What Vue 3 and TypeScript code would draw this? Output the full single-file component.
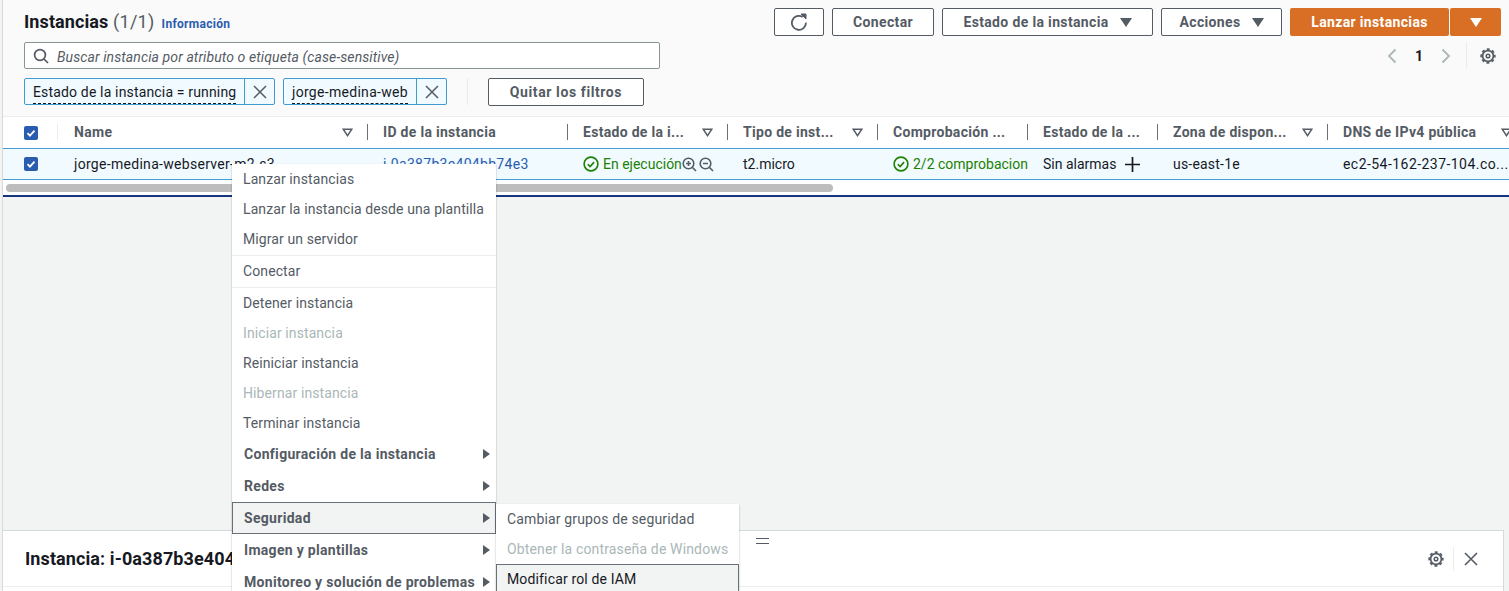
<script setup lang="ts">
interface Col { label: string; filter: boolean }
const cols: Col[] = [
  { label: 'Name', filter: true },
  { label: 'ID de la instancia', filter: false },
  { label: 'Estado de la i...', filter: true },
  { label: 'Tipo de inst...', filter: true },
  { label: 'Comprobación ...', filter: false },
  { label: 'Estado de la ...', filter: false },
  { label: 'Zona de dispon...', filter: true },
  { label: 'DNS de IPv4 pública', filter: true },
]
interface Item { t: string; kind?: string; sep?: boolean }
const items: Item[] = [
  { t: 'Lanzar instancias' },
  { t: 'Lanzar la instancia desde una plantilla' },
  { t: 'Migrar un servidor', sep: true },
  { t: 'Conectar', sep: true },
  { t: 'Detener instancia' },
  { t: 'Iniciar instancia', kind: 'off' },
  { t: 'Reiniciar instancia' },
  { t: 'Hibernar instancia', kind: 'off' },
  { t: 'Terminar instancia' },
  { t: 'Configuración de la instancia', kind: 'sub' },
  { t: 'Redes', kind: 'sub' },
  { t: 'Seguridad', kind: 'sub active' },
  { t: 'Imagen y plantillas', kind: 'sub' },
  { t: 'Monitoreo y solución de problemas', kind: 'sub' },
]
const subItems: Item[] = [
  { t: 'Cambiar grupos de seguridad' },
  { t: 'Obtener la contraseña de Windows', kind: 'off' },
  { t: 'Modificar rol de IAM', kind: 'hover' },
]
</script>

<template>
  <div class="page">
    <section class="top">
      <div class="head">
        <div class="title-row">
          <h1>Instancias <span class="count">(1/1)</span></h1>
          <a class="info">Información</a>
        </div>
        <div class="actions">
          <button class="btn icon-btn" aria-label="Actualizar">
            <svg width="18" height="18" viewBox="0 0 18 18" fill="none" stroke="#545b64" stroke-width="1.8"><path d="M12.6 3.9A7 7 0 1 0 15.9 9.6" /><path d="M11 1h5v5z" fill="#545b64" stroke-width="1" /></svg>
          </button>
          <button class="btn w-connect">Conectar</button>
          <button class="btn w-state">Estado de la instancia <i class="caret"></i></button>
          <button class="btn w-actions">Acciones <i class="caret"></i></button>
          <div class="launch">
            <button class="primary w-launch">Lanzar instancias</button>
            <button class="primary w-arrow"><i class="caret white"></i></button>
          </div>
        </div>
      </div>
      <div class="search-row">
        <div class="search">
          <svg width="16" height="16" viewBox="0 0 16 16" fill="none" stroke="#545b64" stroke-width="1.7"><circle cx="7" cy="7" r="5.4" /><path d="M11 11l4 4" /></svg>
          <span class="search-text">Buscar instancia por atributo o etiqueta (case-sensitive)</span>
        </div>
        <div class="pager">
          <svg width="10" height="16" viewBox="0 0 10 16" fill="none" stroke="#aab7b8" stroke-width="1.8"><path d="M8.5 1.5L2 8l6.5 6.5" /></svg>
          <b>1</b>
          <svg width="10" height="16" viewBox="0 0 10 16" fill="none" stroke="#aab7b8" stroke-width="1.8"><path d="M1.5 1.5L8 8l-6.5 6.5" /></svg>
          <span class="pager-sep"></span>
          <svg class="gear" width="16" height="16" viewBox="0 0 16 16" fill="none" stroke="#545b64"><circle cx="8" cy="8" r="5.4" stroke-width="1.7" /><circle cx="8" cy="8" r="1.8" stroke-width="1.5" /><circle cx="8" cy="8" r="6.8" stroke-width="1.7" stroke-dasharray="3 2.34" stroke-dashoffset="1.5" /></svg>
        </div>
      </div>
      <div class="chips">
        <div class="chip w-chip1"><span class="chip-cell"><span class="chip-text">Estado de la instancia = running</span></span><span class="chip-x"><svg width="14" height="14" viewBox="0 0 14 14" stroke="#545b64" stroke-width="1.5"><path d="M1 1l12 12M13 1L1 13" /></svg></span></div>
        <div class="chip w-chip2"><span class="chip-cell"><span class="chip-text">jorge-medina-web</span></span><span class="chip-x"><svg width="14" height="14" viewBox="0 0 14 14" stroke="#545b64" stroke-width="1.5"><path d="M1 1l12 12M13 1L1 13" /></svg></span></div>
        <span class="chip-sep"></span>
        <button class="btn w-clear">Quitar los filtros</button>
      </div>
    </section>

    <section class="table">
      <div class="grid header">
        <div class="select-cell"><span class="check"><svg width="10" height="10" viewBox="0 0 10 10" fill="none" stroke="#fff" stroke-width="1.8"><path d="M1.5 5.2l2.4 2.4 4.6-5" /></svg></span></div>
        <div v-for="c in cols" :key="c.label" class="th">
          <span class="th-text">{{ c.label }}</span>
          <svg v-if="c.filter" class="sort" width="11" height="9" viewBox="0 0 11 9" fill="none" stroke="#545b64" stroke-width="1.5"><path d="M1.2 1.2h8.6L5.5 7.6z" /></svg>
        </div>
      </div>
      <div class="grid row">
        <div class="select-cell"><span class="check"><svg width="10" height="10" viewBox="0 0 10 10" fill="none" stroke="#fff" stroke-width="1.8"><path d="M1.5 5.2l2.4 2.4 4.6-5" /></svg></span></div>
        <div class="td name">jorge-medina-webserver-m2-s3</div>
        <div class="td"><a class="link">i-0a387b3e404bb74e3</a></div>
        <div class="td status">
          <svg class="ok" width="16" height="16" viewBox="0 0 16 16" fill="none" stroke="#1d8102" stroke-width="1.6"><circle cx="8" cy="8" r="6.9" /><path d="M4.8 8.2l2.3 2.3 4-4.4" /></svg>
          <span>En ejecución</span>
          <svg class="zoom-a" width="15" height="15" viewBox="0 0 15 15" fill="none" stroke="#545b64" stroke-width="1.6"><circle cx="6.5" cy="6.5" r="5.3" /><path d="M10.5 10.5L14 14M4 6.5h5M6.5 4v5" /></svg>
          <svg class="zoom-b" width="15" height="15" viewBox="0 0 15 15" fill="none" stroke="#545b64" stroke-width="1.6"><circle cx="6.5" cy="6.5" r="5.3" /><path d="M10.5 10.5L14 14M4 6.5h5" /></svg>
        </div>
        <div class="td">t2.micro</div>
        <div class="td status clip">
          <svg class="ok" width="16" height="16" viewBox="0 0 16 16" fill="none" stroke="#1d8102" stroke-width="1.6"><circle cx="8" cy="8" r="6.9" /><path d="M4.8 8.2l2.3 2.3 4-4.4" /></svg>
          <span>2/2 comprobaciones</span>
        </div>
        <div class="td alarm">Sin alarmas
          <svg width="15" height="15" viewBox="0 0 15 15" stroke="#16191f" stroke-width="1.7"><path d="M7.5 0v15M0 7.5h15" /></svg>
        </div>
        <div class="td zone">us-east-1e</div>
        <div class="td dns">ec2-54-162-237-104.co...</div>
      </div>
      <div class="scroll-track"><div class="scroll-thumb"></div></div>
    </section>

    <div class="splitter"></div>

    <section class="details">
      <div class="details-head">
        <h2>Instancia: i-0a387b3e404bb74e3</h2>
        <span class="drag"></span>
        <div class="details-tools">
          <svg width="16" height="16" viewBox="0 0 16 16" fill="none" stroke="#545b64"><circle cx="8" cy="8" r="5.4" stroke-width="1.7" /><circle cx="8" cy="8" r="1.8" stroke-width="1.5" /><circle cx="8" cy="8" r="6.8" stroke-width="1.7" stroke-dasharray="3 2.34" stroke-dashoffset="1.5" /></svg>
          <span class="tool-sep"></span>
          <svg width="14" height="14" viewBox="0 0 14 14" stroke="#545b64" stroke-width="1.6"><path d="M1 1l12 12M13 1L1 13" /></svg>
        </div>
      </div>
    </section>

    <ul class="menu">
      <li v-for="it in items" :key="it.t" :class="['item', it.kind, { sep: it.sep }]">
        <span>{{ it.t }}</span>
        <i v-if="it.kind && it.kind.includes('sub')" class="arrow"></i>
      </li>
    </ul>
    <ul class="menu submenu">
      <li v-for="it in subItems" :key="it.t" :class="['item', it.kind]"><span>{{ it.t }}</span></li>
    </ul>
  </div>
</template>

<style>
html, body { margin: 0; overflow: hidden; }
</style>

<style scoped>
* { box-sizing: border-box; }
.page {
  position: relative;
  width: 1509px;
  height: 591px;
  overflow: hidden;
  background: #f2f3f3;
  font-family: Roboto, "Noto Sans", sans-serif;
  font-size: 14px;
  color: #16191f;
  display: flex;
  flex-direction: column;
  padding-left: 3px;
}
.page::before {
  content: "";
  position: absolute;
  left: 2px; top: 0; bottom: 0;
  width: 1px;
  background: #d5dbdb;
}
.top {
  height: 117px;
  background: #fafafa;
  border-bottom: 1px solid #eaeded;
  padding: 8px 8px 0 21px;
}
.head { display: flex; justify-content: space-between; height: 28px; }
.title-row { display: flex; align-items: center; gap: 7px; }
h1 { margin: 0; font-size: 18px; font-weight: 700; line-height: 28px; letter-spacing: .1px; }
.count { font-weight: 400; color: #545b64; letter-spacing: .3px; }
.info { font-size: 12px; font-weight: 700; color: #2a5db0; margin-top: 3px; letter-spacing: .3px; }
.actions { display: flex; gap: 8px; }
.btn {
  height: 28px;
  border: 1px solid #545b64;
  border-radius: 2px;
  background: #fff;
  color: #545b64;
  font: 700 14px Roboto, "Noto Sans", sans-serif;
  letter-spacing: .35px;
  padding: 0;
  display: flex;
  align-items: center;
  justify-content: center;
  gap: 11px;
}
.icon-btn { width: 50px; }
.w-connect { width: 102px; }
.w-state { width: 211px; }
.w-actions { width: 121px; }
.launch { display: flex; gap: 1px; }
.primary {
  height: 28px;
  border: 0;
  border-radius: 2px;
  background: #d86f24;
  color: #fff;
  font: 700 14px Roboto, "Noto Sans", sans-serif;
  letter-spacing: .35px;
  padding: 0;
  display: flex;
  align-items: center;
  justify-content: center;
}
.w-launch { width: 159px; }
.w-arrow { width: 51px; }
.caret {
  width: 0; height: 0;
  border-left: 6px solid transparent;
  border-right: 6px solid transparent;
  border-top: 9px solid #545b64;
}
.caret.white { border-top-color: #fff; }
.search-row { display: flex; justify-content: space-between; margin-top: 6px; height: 27px; }
.search {
  width: 636px;
  border: 1px solid #879596;
  border-radius: 2px;
  background: #fff;
  display: flex;
  align-items: center;
  gap: 8px;
  padding-left: 8px;
  font-style: italic;
  font-size: 14px;
  letter-spacing: .1px;
  color: #545b64;
}
.search-text { padding-top: 2px; }
.pager { display: flex; align-items: center; color: #16191f; padding-right: 5px; }
.pager b { font-size: 14px; width: 40px; text-align: center; margin: 0 2px; }
.pager-sep { width: 1px; height: 27px; background: #eaeded; margin: 0 13px 0 15px; }
.chips { display: flex; align-items: center; margin-top: 9px; height: 27px; gap: 8px; }
.chip {
  height: 27px;
  display: flex;
  border: 1px solid #3f9bd1;
  border-radius: 2px;
  background: #f1faff;
}
.w-chip1 { width: 251px; }
.w-chip2 { width: 164px; }
.chip-cell { flex: 1; padding-left: 8px; min-width: 0; overflow: hidden; }
.chip-text {
  display: inline-block;
  line-height: 24px;
  height: 25px;
  padding-top: 1px;
  white-space: nowrap;
  letter-spacing: .16px;
  border-bottom: 1px dashed #16191f;
}
.w-chip2 .chip-text { letter-spacing: .3px; }
.chip-x {
  width: 30px;
  flex: none;
  border-left: 1px solid #3f9bd1;
  display: flex;
  align-items: center;
  justify-content: center;
}
.chip-sep { width: 1px; height: 27px; background: #eaeded; margin: 0 12px 0 12px; }
.w-clear { width: 156px; letter-spacing: .6px; }
.table { background: #fff; width: 1506px; overflow: hidden; }
.grid {
  display: grid;
  grid-template-columns: 55px 310px 200px 160px 150px 150px 130px 170px 199px;
  width: 1524px;
}
.header { height: 31px; }
.select-cell { display: flex; align-items: center; padding-left: 21px; position: relative; }
.check {
  width: 14px; height: 14px;
  background: #2a5db0;
  border-radius: 2px;
  display: flex;
  align-items: center;
  justify-content: center;
}
.header .select-cell::after {
  content: "";
  position: absolute;
  right: 0; top: 7px; bottom: 8px;
  width: 1px;
  background: #eaeded;
}
.th {
  position: relative;
  padding: 0 0 0 15px;
  display: flex;
  align-items: center;
  justify-content: space-between;
  font-weight: 700;
  letter-spacing: .3px;
  color: #545b64;
  white-space: nowrap;
  overflow: hidden;
}
.th-text { margin-top: -1px; }
.th:nth-child(2), .td:nth-child(2) { padding-left: 16px; }
.th::after {
  content: "";
  position: absolute;
  right: 0; top: 7px; bottom: 8px;
  width: 1px;
  background: #687078;
}
.th:last-child::after { display: none; }
.sort { margin-right: 15px; flex: none; }
.row {
  height: 32px;
  background: #f1faff;
  border-top: 1px solid #44a0d6;
  border-bottom: 1px solid #44a0d6;
}
.td {
  padding-left: 15px;
  display: flex;
  align-items: center;
  white-space: nowrap;
  overflow: hidden;
}
.name { letter-spacing: .3px; }
.link { color: #2a5db0; letter-spacing: .3px; }
.zone { letter-spacing: .2px; }
.dns { letter-spacing: .45px; }
.status { color: #1d8102; gap: 4px; }
.ok, .zoom-a, .zoom-b { flex: none; }
.zoom-a { margin-left: -4px; }
.zoom-b { margin-left: -2px; }
.alarm { gap: 9px; }
.scroll-track { height: 15px; padding: 4px 0 0 3px; background: #fff; }
.scroll-thumb { width: 827px; height: 8px; background: #bdbdbd; border-radius: 4px; }
.splitter { height: 2px; background: #16357f; }
.details {
  margin-top: auto;
  height: 61px;
  background: #fff;
  border-top: 1px solid #d5dbdb;
  margin-right: 5px;
  border-right: 1px solid #d5dbdb;
}
.details-head {
  height: 56px;
  border-bottom: 1px solid #eaeded;
  display: flex;
  align-items: center;
  padding: 0 25px 0 22px;
  position: relative;
}
h2 { margin: 0; font-size: 18px; font-weight: 700; white-space: nowrap; letter-spacing: .1px; }
.drag {
  position: absolute;
  left: 753px; top: 7px;
  width: 13px; height: 6px;
  border-top: 1px solid #545b64;
  border-bottom: 1px solid #545b64;
}
.details-tools { margin-left: auto; display: flex; align-items: center; }
.tool-sep { width: 1px; height: 24px; background: #eaeded; margin: 0 10px 0 9px; }
.menu {
  position: absolute;
  left: 232px; top: 164px;
  width: 264px;
  margin: 0;
  padding: 0;
  list-style: none;
  background: #fff;
  box-shadow: 0 1px 2px rgba(0, 28, 36, .3);
  color: #545b64;
  letter-spacing: .1px;
}
.submenu { left: 496px; top: 504px; width: 243px; letter-spacing: .15px; }
.item {
  height: 30px;
  padding: 0 11px;
  display: flex;
  align-items: center;
  justify-content: space-between;
  white-space: nowrap;
}
.item.sep { height: 32px; padding-bottom: 2px; border-bottom: 1px solid #eaeded; }
.item.off { color: #aab7b8; }
.item.sub { height: 32px; font-weight: 700; letter-spacing: .3px; padding: 0 6px 0 12px; }
.item.active { background: #f2f3f3; border: 1px solid #687078; padding: 0 5px 0 11px; }
.item.hover { background: #f2f3f3; border: 1px solid #687078; color: #16191f; padding: 0 10px; }
.arrow {
  width: 0; height: 0;
  border-top: 5px solid transparent;
  border-bottom: 5px solid transparent;
  border-left: 7px solid #545b64;
}
</style>
